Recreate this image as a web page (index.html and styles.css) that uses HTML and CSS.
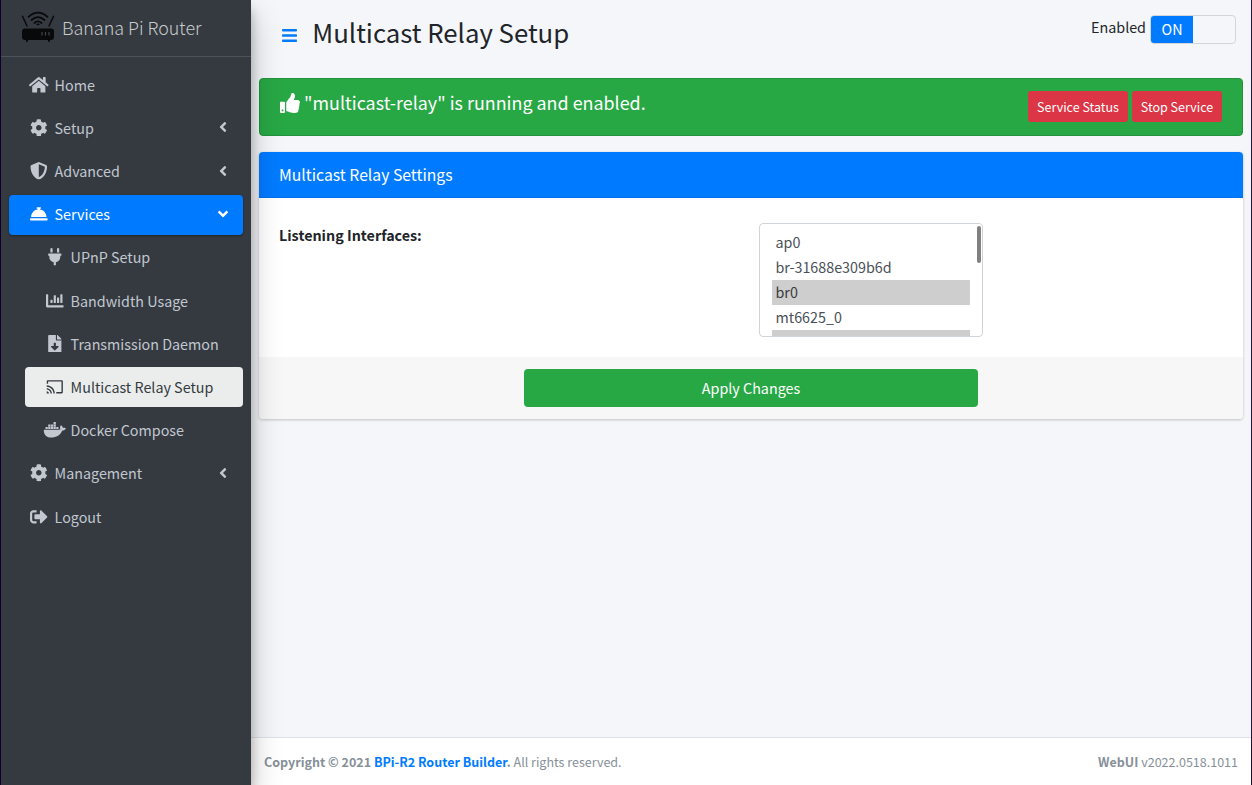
FILE: index.html
```html
<!DOCTYPE html>
<html lang="en">
<head>
<meta charset="utf-8">
<title>Multicast Relay Setup</title>
<link rel="stylesheet" href="styles.css">
</head>
<body>
<svg class="defs" width="0" height="0">
  <symbol id="home" viewBox="0 0 576 512"><path d="M280.37 148.26L96 300.11V464a16 16 0 0 0 16 16l112.06-.29a16 16 0 0 0 15.92-16V368a16 16 0 0 1 16-16h64a16 16 0 0 1 16 16v95.64a16 16 0 0 0 16 16.05L464 480a16 16 0 0 0 16-16V300L295.67 148.26a12.19 12.19 0 0 0-15.3 0zM571.6 251.47L488 182.56V44.05a12 12 0 0 0-12-12h-56a12 12 0 0 0-12 12v72.61L318.47 43a48 48 0 0 0-61 0L4.34 251.47a12 12 0 0 0-1.6 16.9l25.5 31A12 12 0 0 0 45.15 301l235.22-193.74a12.19 12.19 0 0 1 15.3 0L530.9 301a12 12 0 0 0 16.9-1.6l25.5-31a12 12 0 0 0-1.7-16.93z"/></symbol>
  <symbol id="cog" viewBox="0 0 512 512"><path d="M487.4 315.7l-42.6-24.6c4.3-23.2 4.3-47 0-70.2l42.6-24.6c4.9-2.8 7.1-8.6 5.5-14-11.1-35.6-30-67.8-54.7-94.6-3.8-4.1-10-5.1-14.8-2.3L380.8 110c-17.9-15.4-38.5-27.3-60.8-35.1V25.8c0-5.6-3.9-10.5-9.4-11.7-36.7-8.2-74.3-7.8-109.2 0-5.5 1.2-9.4 6.1-9.4 11.7V75c-22.2 7.9-42.8 19.8-60.8 35.1L88.7 85.5c-4.9-2.8-11-1.9-14.8 2.3-24.7 26.7-43.6 58.9-54.7 94.6-1.7 5.4.6 11.2 5.5 14L67.3 221c-4.3 23.2-4.3 47 0 70.2l-42.6 24.6c-4.9 2.8-7.1 8.6-5.5 14 11.1 35.6 30 67.8 54.7 94.6 3.8 4.1 10 5.1 14.8 2.3l42.6-24.6c17.9 15.4 38.5 27.3 60.8 35.1v49.2c0 5.6 3.9 10.5 9.4 11.7 36.7 8.2 74.3 7.8 109.2 0 5.5-1.2 9.4-6.1 9.4-11.7v-49.2c22.2-7.9 42.8-19.8 60.8-35.1l42.6 24.6c4.9 2.8 11 1.9 14.8-2.3 24.7-26.7 43.6-58.9 54.7-94.6 1.5-5.5-.7-11.3-5.6-14.1zM256 336c-44.1 0-80-35.9-80-80s35.9-80 80-80 80 35.9 80 80-35.9 80-80 80z"/></symbol>
  <symbol id="shield" viewBox="0 0 512 512"><path d="M466.5 83.7l-192-80a48.15 48.15 0 0 0-36.9 0l-192 80C27.7 91.1 16 108.6 16 128c0 198.5 114.5 335.7 221.5 380.3 11.8 4.9 25.1 4.9 36.9 0C360.1 472.6 496 349.3 496 128c0-19.4-11.7-36.9-29.5-44.3zM256.1 446.3l-.1-381 175.9 73.3c-3.3 151.4-82.1 261.1-175.8 307.7z"/></symbol>
  <symbol id="bell" viewBox="0 0 512 512"><path d="M288 130.54V112h16c8.84 0 16-7.16 16-16V80c0-8.84-7.16-16-16-16h-96c-8.84 0-16 7.16-16 16v16c0 8.84 7.16 16 16 16h16v18.54C115.49 146.11 32 239.18 32 352h448c0-112.82-83.49-205.89-192-221.46zM496 384H16c-8.84 0-16 7.16-16 16v32c0 8.84 7.16 16 16 16h480c8.84 0 16-7.16 16-16v-32c0-8.84-7.16-16-16-16z"/></symbol>
  <symbol id="plug" viewBox="0 0 384 512"><path d="M320,32a32,32,0,0,0-64,0v96h64Zm48,128H16A16,16,0,0,0,0,176v32a16,16,0,0,0,16,16H32v32A160.07,160.07,0,0,0,160,412.8V512h64V412.8A160.07,160.07,0,0,0,352,256V224h16a16,16,0,0,0,16-16V176A16,16,0,0,0,368,160ZM128,32a32,32,0,0,0-64,0v96h64Z"/></symbol>
  <symbol id="chart" viewBox="0 0 512 512"><path d="M332.8 320h38.4c6.4 0 12.8-6.4 12.8-12.8V172.8c0-6.4-6.4-12.8-12.8-12.8h-38.4c-6.4 0-12.8 6.4-12.8 12.8v134.4c0 6.4 6.4 12.8 12.8 12.8zm96 0h38.4c6.4 0 12.8-6.4 12.8-12.8V76.8c0-6.4-6.4-12.8-12.8-12.8h-38.4c-6.4 0-12.8 6.4-12.8 12.8v230.4c0 6.4 6.4 12.8 12.8 12.8zm-288 0h38.4c6.4 0 12.8-6.4 12.8-12.8v-70.4c0-6.4-6.4-12.8-12.8-12.8h-38.4c-6.4 0-12.8 6.4-12.8 12.8v70.4c0 6.4 6.4 12.8 12.8 12.8zm96 0h38.4c6.4 0 12.8-6.4 12.8-12.8V108.8c0-6.4-6.4-12.8-12.8-12.8h-38.4c-6.4 0-12.8 6.4-12.8 12.8v198.4c0 6.4 6.4 12.8 12.8 12.8zM496 384H64V80c0-8.84-7.16-16-16-16H16C7.16 64 0 71.16 0 80v336c0 17.67 14.33 32 32 32h464c8.84 0 16-7.16 16-16v-32c0-8.84-7.16-16-16-16z"/></symbol>
  <symbol id="file" viewBox="0 0 384 512"><path d="M224 136V0H24C10.7 0 0 10.7 0 24v464c0 13.3 10.7 24 24 24h336c13.3 0 24-10.7 24-24V160H248c-13.2 0-24-10.8-24-24zm76.45 211.36l-96.42 95.7c-6.65 6.61-17.39 6.61-24.04 0l-96.42-95.7C73.42 337.29 80.54 320 94.82 320H160v-80c0-8.84 7.16-16 16-16h32c8.84 0 16 7.16 16 16v80h65.18c14.28 0 21.4 17.29 11.27 27.36zM377 105L279.1 7c-4.5-4.5-10.6-7-17-7H256v128h128v-6.1c0-6.3-2.5-12.4-7-16.9z"/></symbol>
  <symbol id="cast" viewBox="0 0 24 24"><path d="M21.5 3H2.5C1.7 3 1 3.7 1 4.5V8h1.9V4.900h18.200v14.200H14V21h7.500c.8 0 1.500-.7 1.500-1.500v-15c0-.8-.7-1.500-1.500-1.500zM1 18v3h3c0-1.660-1.340-3-3-3zm0-4v1.800c2.760 0 5.200 2.440 5.200 5.200H8c0-3.870-3.130-7-7-7zm0-4v1.800c4.970 0 9.200 4.230 9.200 9.200H12c0-6.080-4.930-11-11-11z"/></symbol>
  <symbol id="docker" viewBox="0 0 640 512"><path d="M349.9 236.3h-66.1v-59.4h66.1v59.4zm0-204.3h-66.1v60.7h66.1V32zm78.2 144.8H362v59.4h66.1v-59.4zm-156.3-72.1h-66.1v60.1h66.1v-60.1zm78.1 0h-66.1v60.1h66.1v-60.1zm276.8 100c-14.4-9.7-47.6-13.2-73.1-8.4-3.3-24-16.7-44.9-41.1-63.7l-14-9.3-9.3 14c-18.4 27.8-23.4 73.6-3.7 103.8-8.7 4.7-25.8 11.1-48.4 10.7H2.4c-8.7 50.8 5.8 116.8 44 162.1 37.1 43.9 92.7 66.2 165.4 66.2 157.4 0 273.9-72.5 328.4-204.2 21.4.4 67.6.1 91.3-45.2 1.5-2.5 6.6-13.2 8.5-17.1l-13.3-8.9zm-511.1-27.9h-66v59.4h66.1v-59.4zm78.1 0h-66.1v59.4h66.1v-59.4zm78.1 0h-66.1v59.4h66.1v-59.4zm-78.1-72.1h-66.1v60.1h66.1v-60.1z"/></symbol>
  <symbol id="logout" viewBox="0 0 512 512"><path d="M497 273L329 441c-15 15-41 4.500-41-17v-96H152c-13.300 0-24-10.700-24-24v-96c0-13.300 10.700-24 24-24h136V88c0-21.400 25.900-32 41-17l168 168c9.300 9.400 9.300 24.600 0 34zM192 436v-40c0-6.600-5.400-12-12-12H96c-17.700 0-32-14.300-32-32V160c0-17.700 14.300-32 32-32h84c6.600 0 12-5.400 12-12V76c0-6.600-5.400-12-12-12H96c-53 0-96 43-96 96v192c0 53 43 96 96 96h84c6.600 0 12-5.400 12-12z"/></symbol>
  <symbol id="angle" viewBox="0 0 256 512"><path d="M31.700 239l136-136c9.400-9.400 24.600-9.400 33.900 0l22.600 22.600c9.400 9.400 9.400 24.600 0 33.900L127.900 256l96.400 96.400c9.400 9.400 9.400 24.600 0 33.900L201.700 409c-9.400 9.400-24.600 9.400-33.900 0l-136-136c-9.500-9.400-9.500-24.600-.1-34z"/></symbol>
  <symbol id="bars" viewBox="0 0 448 512"><path d="M16 132h416c8.800 0 16-7.200 16-16V76c0-8.800-7.200-16-16-16H16C7.200 60 0 67.200 0 76v40c0 8.800 7.200 16 16 16zm0 160h416c8.800 0 16-7.200 16-16v-40c0-8.800-7.200-16-16-16H16c-8.800 0-16 7.200-16 16v40c0 8.800 7.200 16 16 16zm0 160h416c8.800 0 16-7.200 16-16v-40c0-8.800-7.200-16-16-16H16c-8.800 0-16 7.200-16 16v40c0 8.800 7.200 16 16 16z"/></symbol>
  <symbol id="thumb" viewBox="0 0 512 512"><path d="M104 224H24c-13.255 0-24 10.745-24 24v240c0 13.255 10.745 24 24 24h80c13.255 0 24-10.745 24-24V248c0-13.255-10.745-24-24-24zM64 472c-13.255 0-24-10.745-24-24s10.745-24 24-24 24 10.745 24 24-10.745 24-24 24zM384 81.452c0 42.416-25.970 66.208-33.277 94.548h101.723c33.397 0 59.397 27.746 59.553 58.098.084 17.938-7.546 37.249-19.439 49.197l-.11.11c9.836 23.337 8.237 56.037-9.308 79.469 8.681 25.895-.069 57.704-16.382 74.757 4.298 17.598 2.244 32.575-6.148 44.632C440.202 511.587 389.616 512 346.839 512l-2.845-.001c-48.287-.017-87.806-17.598-119.560-31.725-15.957-7.099-36.821-15.887-52.651-16.178-6.540-.12-11.783-5.457-11.783-11.998v-213.770c0-3.200 1.282-6.271 3.558-8.521 39.614-39.144 56.648-80.587 89.117-113.111 14.804-14.832 20.188-37.236 25.393-58.902C282.515 39.293 291.817 0 312 0c24 0 72 8 72 81.452z"/></symbol>
</svg>
<div class="app">
  <aside class="sidebar">
    <div class="brand">
      <svg class="brand-logo" viewBox="0 0 34 32">
        <g fill="none" stroke="#08090b" stroke-linecap="round">
          <path stroke-width="1.5" d="M1.500 5.200L6 15M32.500 5.200L28 15"/>
          <path stroke-width="1.7" d="M7.500 5.800Q17-2.600 26.500 5.800M10.500 9Q17 3.200 23.500 9M13.500 12Q17 8.800 20.500 12"/>
        </g>
        <path fill="#08090b" d="M15 13.200q2-1.600 4 0l-2 1.300zM4 17.500h26q3 0 3 3v5.500q0 3-3 3h-1v1q0 1-1 1t-1-1v-1H7v1q0 1-1 1t-1-1v-1H4q-3 0-3-3v-5.500q0-3 3-3z"/>
        <path stroke="#40454c" stroke-width="1.2" d="M21 21v3.500M24.500 21v3.500M28 21v3.500"/>
      </svg>
      <span class="brand-text">Banana Pi Router</span>
    </div>
    <nav class="menu">
      <a class="item"><svg class="icon"><use href="#home"/></svg><span>Home</span></a>
      <a class="item"><svg class="icon"><use href="#cog"/></svg><span>Setup</span><svg class="arrow"><use href="#angle"/></svg></a>
      <a class="item"><svg class="icon"><use href="#shield"/></svg><span>Advanced</span><svg class="arrow"><use href="#angle"/></svg></a>
      <a class="item open"><svg class="icon"><use href="#bell"/></svg><span>Services</span><svg class="arrow"><use href="#angle"/></svg></a>
      <div class="submenu">
        <a class="item"><svg class="icon"><use href="#plug"/></svg><span>UPnP Setup</span></a>
        <a class="item"><svg class="icon"><use href="#chart"/></svg><span>Bandwidth Usage</span></a>
        <a class="item"><svg class="icon"><use href="#file"/></svg><span>Transmission Daemon</span></a>
        <a class="item current"><svg class="icon"><use href="#cast"/></svg><span>Multicast Relay Setup</span></a>
        <a class="item"><svg class="icon"><use href="#docker"/></svg><span>Docker Compose</span></a>
      </div>
      <a class="item"><svg class="icon"><use href="#cog"/></svg><span>Management</span><svg class="arrow"><use href="#angle"/></svg></a>
      <a class="item"><svg class="icon"><use href="#logout"/></svg><span>Logout</span></a>
    </nav>
  </aside>
  <div class="page">
    <header class="header">
      <svg class="bars"><use href="#bars"/></svg>
      <h1 class="title">Multicast Relay Setup</h1>
      <span class="enabled">Enabled</span>
      <div class="switch"><span class="switch-on">ON</span></div>
    </header>
    <main class="content">
      <div class="alert">
        <svg class="thumb"><use href="#thumb"/></svg>
        <div class="alert-text">"multicast-relay" is running and enabled.</div>
        <button class="btn status">Service Status</button>
        <button class="btn stop">Stop Service</button>
      </div>
      <section class="card">
        <h2 class="card-header">Multicast Relay Settings</h2>
        <div class="card-body">
          <div class="label">Listening Interfaces:</div>
          <div class="listbox">
            <div class="option">ap0</div>
            <div class="option">br-31688e309b6d</div>
            <div class="option selected">br0</div>
            <div class="option">mt6625_0</div>
            <div class="option selected"></div>
            <div class="scrollbar"></div>
          </div>
        </div>
        <div class="card-footer"><button class="apply">Apply Changes</button></div>
      </section>
    </main>
    <footer class="footer">
      <div class="copy"><b>Copyright © 2021 <a>BPi-R2 Router Builder</a>.</b> All rights reserved.</div>
      <div class="version"><b>WebUI</b> v2022.0518.1011</div>
    </footer>
  </div>
</div>
</body>
</html>
```
FILE: styles.css
```css
* { box-sizing: border-box; }
body {
  margin: 0;
  font-family: "Noto Sans CJK SC", "Noto Sans", sans-serif;
  font-size: 14.32px;
  line-height: 24px;
  color: #212529;
}
.defs { display: block; }
svg { fill: currentColor; flex: none; }
.app {
  display: flex;
  height: 785px;
  border-left: 1px solid #0d0030;
  border-right: 1px solid #250d48;
  background: #f4f6f9;
  overflow: hidden;
}
.sidebar {
  position: relative;
  z-index: 1;
  width: 250px;
  flex: none;
  background: #343a40;
  color: #c2c7d0;
  box-shadow: 0 14px 28px rgba(0,0,0,.25), 0 10px 10px rgba(0,0,0,.22);
}
.brand {
  display: flex;
  align-items: center;
  height: 57px;
  padding-left: 20px;
  border-bottom: 1px solid #4b545c;
}
.brand-logo { width: 34px; height: 32px; margin: -3px 7px 0 0; }
.brand-text { margin-bottom: 2px; font-size: 17.9px; font-weight: 300; color: #c9cbcd; white-space: nowrap; }
.menu { padding: 8px 8px 0; }
.item {
  display: flex;
  align-items: center;
  height: 40px;
  margin-bottom: 3.2px;
  padding: 0 16px;
  border-radius: 4px;
  white-space: nowrap;
}
.item span { margin-bottom: .6px; }
.icon { width: 25.6px; height: 17.6px; margin: -1px 3.2px 0 .8px; }
.arrow { width: 16px; height: 16px; margin: -1.5px -4px 0 auto; }
.open { background: #007bff; color: #fff; box-shadow: 0 1px 3px rgba(0,0,0,.12), 0 1px 2px rgba(0,0,0,.24); }
.open .arrow { transform: rotate(-90deg); }
.submenu { padding-left: 16px; }
.current { background: #ebedec; color: #343a40; }
.page { flex: 1; display: flex; flex-direction: column; min-width: 0; }
.header { display: flex; height: 78px; padding: 15px 15px 0 31px; }
.bars { width: 15px; height: 17px; margin-top: 11.5px; color: #007bff; }
.title { margin: 0 auto 0 15.3px; font-size: 25.75px; font-weight: 400; line-height: 34px; }
.enabled { margin-right: 4px; }
.switch {
  width: 86px;
  height: 29px;
  border: 1px solid #d2d6da;
  border-radius: 4px;
  overflow: hidden;
}
.switch-on { display: block; width: 42px; height: 27px; line-height: 25px; text-align: center; background: #007bff; color: #fff; }
.content { flex: 1; padding: 0 8px; }
.alert {
  display: flex;
  height: 58px;
  padding: 12px 20px;
  border: 1px solid #23923d;
  border-radius: 4px;
  background: #28a745;
  color: #fff;
}
.thumb { width: 20px; height: 20px; margin-top: 1.5px; }
.alert-text { margin: 0 auto 0 4px; font-size: 17.9px; line-height: 22px; }
.btn, .apply { border: 0; padding: 0; border-radius: 3px; font-family: inherit; color: #fff; }
.btn { height: 31px; font-size: 12.53px; background: #dc3545; }
.status { width: 100px; }
.stop { width: 90px; margin-left: 4px; }
.card {
  margin-top: 16px;
  border-radius: 4px;
  background: #fff;
  box-shadow: 0 0 1px rgba(0,0,0,.125), 0 1px 3px rgba(0,0,0,.2);
  overflow: hidden;
}
.card-header { margin: 0; height: 46px; padding: 0 20px; font-size: 15.75px; font-weight: 400; line-height: 46px; background: #007bff; color: #fff; border-bottom: 1px solid #0071eb; }
.card-body { display: flex; height: 159px; padding: 25px 20px 0; }
.label { width: 480px; font-weight: 700; }
.listbox {
  position: relative;
  width: 224px;
  height: 114px;
  padding: 6px 12px;
  border: 1px solid #ced4da;
  border-radius: 4px;
  color: #495057;
  overflow: hidden;
}
.option { height: 25px; line-height: 23px; padding-left: 3.5px; }
.selected { background: #cecece; color: #3a3a3a; }
.scrollbar { position: absolute; top: 2px; right: 1.5px; width: 3.5px; height: 37px; border-radius: 2px; background: #808080; }
.card-footer { display: flex; justify-content: center; height: 62px; padding-top: 12px; background: #f7f7f7; }
.apply { width: 454px; height: 38px; padding-bottom: 2px; font-size: 14.32px; border-radius: 4px; background: #28a745; }
.footer {
  display: flex;
  justify-content: space-between;
  height: 48px;
  padding: 12px 13px 0;
  border-top: 1px solid #dee2e6;
  background: #fff;
  color: #869099;
  font-size: 12.53px;
}
.footer a { color: #007bff; }
```
